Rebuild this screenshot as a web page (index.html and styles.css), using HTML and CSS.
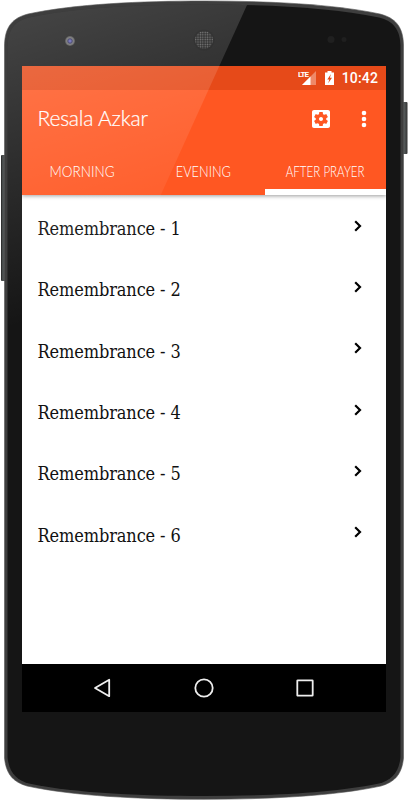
FILE: index.html
```html
<!DOCTYPE html>
<html lang="en">
<head>
  <meta charset="UTF-8" />
  <meta name="viewport" content="width=device-width, initial-scale=1" />
  <title>Resala Azkar</title>
  <link rel="stylesheet" href="styles.css">
</head>
<body>
  <div class="phone">
    <!-- Phone body -->
    <svg class="phone-body" viewBox="0 0 408 800" aria-hidden="true">
      <defs>
        <linearGradient id="key" x1="0" x2="1" y1="0" y2="0">
          <stop offset="0" stop-color="#222" />
          <stop offset="0.4" stop-color="#555a5a" />
          <stop offset="1" stop-color="#333" />
        </linearGradient>
        <pattern id="mesh" width="2.4" height="2.4" patternUnits="userSpaceOnUse">
          <rect width="2.4" height="2.4" fill="#111" />
          <circle cx="1.2" cy="1.2" r="0.75" fill="#666" />
        </pattern>
        <radialGradient id="lens">
          <stop offset="0" stop-color="#7070d8" />
          <stop offset="0.45" stop-color="#30305a" />
          <stop offset="0.65" stop-color="#707070" />
          <stop offset="1" stop-color="#3a3a3a" />
        </radialGradient>
      </defs>
      <rect x="1" y="155" width="5" height="126" rx="1" fill="url(#key)" />
      <rect x="402" y="102" width="5.5" height="52" rx="1" fill="url(#key)" />
      <path d="M4.500 45C5 26 13 18 28 14C75 4 140 1 204 1C268 1 333 4 380 14C395 18 403 26 403.500 45V758C402 774 395 782 381 786C335 796 268 799.300 204 799.300C140 799.300 73 796 27 786C13 782 6 774 4.500 758Z" fill="#3e3e3e" stroke="#555" stroke-width="0.6" />
      <path d="M7.500 46C8 29 15 21 29 17.500C76 7.500 140 4.500 204 4.500C268 4.500 332 7.500 379 17.500C393 21 400 29 400.500 46V757C399 772 392 780 379 783.500C334 793 268 796 204 796C140 796 74 793 29 783.500C16 780 9 772 7.500 757Z" fill="#151515" />
      <circle cx="70" cy="41" r="5" fill="url(#lens)" />
      <circle cx="204" cy="40" r="10.500" fill="#111" />
      <circle cx="204" cy="40" r="9" fill="url(#mesh)" />
      <circle cx="331" cy="39.500" r="3.500" fill="#202020" />
      <circle cx="344" cy="39.500" r="2.500" fill="#1f1f1f" />
    </svg>

    <div class="screen">
      <!-- Status bar -->
      <div class="status-bar">
        <svg class="signal" viewBox="0 0 19 16">
          <path d="M18 1V15H4Z" fill="#fff" opacity="0.35" />
          <path d="M12.500 6.500V15H4Z" fill="#fff" />
          <text class="signal-text" x="0" y="7">LTE</text>
        </svg>
        <svg class="battery" viewBox="0 0 9 14">
          <path d="M0 1.500H2.500V0H6.500V1.500H9V14H0Z" fill="#fff" />
          <path d="M6 3L2.300 8.500H4.300L3.200 12.200L7 6.800H4.900Z" fill="#e64a19" />
        </svg>
        <span class="clock">10:42</span>
      </div>

      <!-- App bar -->
      <div class="app-bar">
        <h1 class="app-title">Resala Azkar</h1>
        <svg class="settings" viewBox="3 3 18 18" fill="#fff">
          <path d="M12 10c-1.100 0-2 .9-2 2s.9 2 2 2 2-.9 2-2-.9-2-2-2zm7-7H5c-1.110 0-2 .9-2 2v14c0 1.100.89 2 2 2h14c1.110 0 2-.9 2-2V5c0-1.100-.89-2-2-2zm-1.750 9c0 .23-.02.46-.05.68l1.480 1.160c.13.11.17.3.08.45l-1.400 2.420c-.09.15-.27.21-.43.15l-1.740-.7c-.36.28-.76.51-1.180.69l-.26 1.850c-.03.17-.18.3-.35.3h-2.800c-.17 0-.32-.13-.35-.29l-.26-1.850c-.43-.18-.82-.41-1.180-.69l-1.740.7c-.16.06-.34 0-.43-.15l-1.400-2.420c-.09-.15-.05-.34.08-.45l1.480-1.160c-.03-.23-.05-.46-.05-.69s.02-.46.05-.68l-1.480-1.160c-.13-.11-.17-.3-.08-.45l1.400-2.420c.09-.15.27-.21.43-.15l1.740.7c.36-.28.76-.51 1.180-.69l.26-1.850c.03-.17.18-.3.35-.3h2.800c.17 0 .32.13.35.29l.26 1.850c.43.18.82.41 1.180.69l1.740-.7c.16-.06.34 0 .43.15l1.400 2.420c.09.15.05.34-.08.45l-1.480 1.160c.03.23.05.46.05.69z" />
        </svg>
        <svg class="more" viewBox="0 0 6 18" fill="#fff">
          <circle cx="3" cy="3" r="2.300" />
          <circle cx="3" cy="9" r="2.300" />
          <circle cx="3" cy="15" r="2.300" />
        </svg>
      </div>

      <!-- Tabs -->
      <div class="tabs">
        <div class="tab"><span class="morning">MORNING</span></div>
        <div class="tab"><span class="evening">EVENING</span></div>
        <div class="tab active"><span class="prayer">AFTER PRAYER</span></div>
      </div>

      <!-- Remembrance list -->
      <div class="list">
        <div class="item"><span>Remembrance - 1</span><svg class="chevron" viewBox="0 0 8 12"><path d="M1.200 1.200L6 6L1.200 10.800" /></svg></div>
        <div class="item"><span>Remembrance - 2</span><svg class="chevron" viewBox="0 0 8 12"><path d="M1.200 1.200L6 6L1.200 10.800" /></svg></div>
        <div class="item"><span>Remembrance - 3</span><svg class="chevron" viewBox="0 0 8 12"><path d="M1.200 1.200L6 6L1.200 10.800" /></svg></div>
        <div class="item"><span>Remembrance - 4</span><svg class="chevron" viewBox="0 0 8 12"><path d="M1.200 1.200L6 6L1.200 10.800" /></svg></div>
        <div class="item"><span>Remembrance - 5</span><svg class="chevron" viewBox="0 0 8 12"><path d="M1.200 1.200L6 6L1.200 10.800" /></svg></div>
        <div class="item"><span>Remembrance - 6</span><svg class="chevron" viewBox="0 0 8 12"><path d="M1.200 1.200L6 6L1.200 10.800" /></svg></div>
      </div>

      <!-- Navigation bar -->
      <div class="nav-bar">
        <svg viewBox="0 0 20 20"><path d="M16.200 1.800V18.200L2 10Z" /></svg>
        <svg viewBox="0 0 20 20"><circle cx="10" cy="10" r="8.700" /></svg>
        <svg viewBox="0 0 20 20"><rect x="2.300" y="2.300" width="15.400" height="15.400" rx="0.500" /></svg>
      </div>
    </div>

    <!-- Glass reflection -->
    <svg class="glare" viewBox="0 0 408 800" aria-hidden="true">
      <defs>
        <linearGradient id="shine" gradientUnits="userSpaceOnUse" x1="40" y1="10" x2="130" y2="290">
          <stop offset="0" stop-color="#fff" stop-opacity="0.2" />
          <stop offset="1" stop-color="#fff" stop-opacity="0" />
        </linearGradient>
      </defs>
      <path d="M7.500 46C8 29 15 21 29 17.500C76 7.500 140 4.500 204 4.500L247 5L24 496H7.500Z" fill="url(#shine)" />
    </svg>
  </div>
</body>
</html>
```

FILE: styles.css
```css
:root {
  --primary: #ff5722;
  --primary-dark: #e64a19;
  --white: #fff;
}

* {
  margin: 0;
  padding: 0;
  box-sizing: border-box;
}

body {
  background-color: var(--white);
  overflow: hidden;
}

.phone {
  position: relative;
  width: 408px;
  height: 800px;
  padding: 66px 22px 88px 21.5px;
}

.phone-body,
.glare {
  position: absolute;
  top: 0;
  left: 0;
  width: 408px;
  height: 800px;
}

.glare {
  pointer-events: none;
}

.screen {
  position: relative;
  height: 646px;
  display: flex;
  flex-direction: column;
  background-color: var(--white);
}

/* Status bar */
.status-bar {
  height: 24px;
  display: flex;
  justify-content: flex-end;
  align-items: center;
  padding-right: 8px;
  background-color: var(--primary-dark);
  color: var(--white);
}

.signal {
  width: 19px;
  height: 16px;
  margin-right: 7.5px;
}

.signal-text {
  font-family: 'Roboto', sans-serif;
  font-size: 8px;
  font-weight: 700;
  letter-spacing: -1px;
  fill: var(--white);
}

.battery {
  width: 9px;
  height: 14px;
  margin-right: 8px;
}

.clock {
  font-family: 'Roboto', sans-serif;
  font-size: 14px;
  font-weight: 500;
  line-height: 24px;
  letter-spacing: 0.15px;
}

/* App bar */
.app-bar {
  height: 57px;
  display: flex;
  align-items: center;
  padding: 0 19.5px 0 16px;
  background-color: var(--primary);
}

.app-title {
  flex: 1;
  padding-bottom: 3px;
  font-family: 'Lato', sans-serif;
  font-size: 21px;
  font-weight: 300;
  letter-spacing: -0.2px;
  color: var(--white);
  -webkit-text-stroke: 0.2px var(--white);
}

.settings {
  width: 18px;
  height: 18px;
  margin-right: 31px;
}

.more {
  width: 6px;
  height: 18px;
}

/* Tabs */
.tabs {
  height: 48px;
  display: flex;
  background-color: var(--primary);
  box-shadow: 0 1px 4px rgba(0, 0, 0, 0.4);
  clip-path: inset(0 0 -6px 0);
}

.tab {
  flex: 1;
  display: flex;
  justify-content: center;
  align-items: center;
  padding-bottom: 1px;
  font-family: 'Lato', sans-serif;
  font-size: 15px;
  font-weight: 300;
  line-height: 46px;
  color: var(--white);
  white-space: nowrap;
}

.tab.active {
  box-shadow: inset 0 -6px var(--white);
}

/* Narrow capitals */
.morning {
  transform: scaleX(0.9);
}

.evening {
  transform: scaleX(0.85);
}

.prayer {
  transform: scaleX(0.77);
}

/* List */
.list {
  flex: 1;
  padding-top: 3px;
}

.item {
  height: 61.3px;
  display: flex;
  justify-content: space-between;
  align-items: center;
  padding: 0 24px 0 16px;
  font-family: 'DejaVu Serif Condensed', 'DejaVu Serif', serif;
  font-size: 18px;
  letter-spacing: -0.12px;
  color: #111;
}

.chevron {
  width: 8px;
  height: 12px;
  position: relative;
  top: -3px;
  fill: none;
  stroke: #000;
  stroke-width: 2.2;
}

/* Navigation bar */
.nav-bar {
  height: 48px;
  display: flex;
  justify-content: center;
  align-items: center;
  gap: 81px;
  background-color: #000;
}

.nav-bar svg {
  width: 20px;
  height: 20px;
  fill: none;
  stroke: #eee;
  stroke-width: 1.8;
  stroke-linejoin: round;
}
```
